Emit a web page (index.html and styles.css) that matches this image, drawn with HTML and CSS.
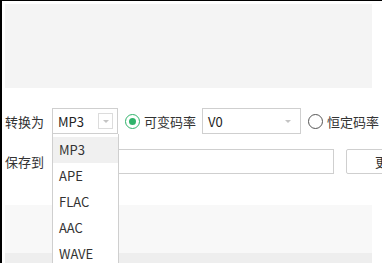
FILE: index.html
```html
<!DOCTYPE html>
<html lang="zh-CN">
<head>
  <meta charset="UTF-8" />
  <title>格式转换</title>
  <link rel="stylesheet" href="styles.css">
</head>
<body>
  <div class="frame">
    <div class="preview"></div>

    <div class="row row-format">
      <span class="label">转换为</span>
      <div class="select select-format">
        <span class="value">MP3</span>
        <span class="arrow-box"><span class="tri"></span></span>
      </div>
      <span class="radio checked"></span>
      <span class="radio-text">可变码率</span>
      <div class="select select-rate">
        <span class="value">V0</span>
        <span class="tri"></span>
      </div>
      <span class="radio"></span>
      <span class="radio-text">恒定码率</span>
    </div>

    <div class="row row-save">
      <span class="label">保存到</span>
      <div class="path-input"></div>
      <button class="btn">更改</button>
    </div>

    <div class="footer">
      <div class="footer-top"></div>
      <div class="footer-bottom"></div>
    </div>

    <ul class="dropdown">
      <li class="active">MP3</li>
      <li>APE</li>
      <li>FLAC</li>
      <li>AAC</li>
      <li>WAVE</li>
    </ul>
  </div>
</body>
</html>
```

FILE: styles.css
```css
html, body {
  margin: 0;
  padding: 0;
  background: #fff;
  overflow: hidden;
}
body {
  font-family: "Noto Sans CJK SC", "Liberation Sans", sans-serif;
  font-size: 13px;
  color: #333;
  width: 382px;
  height: 263px;
}
.frame {
  position: relative;
  height: 262px;
  width: 380px;
  border-left: 2px solid #000;
  border-top: 1px solid #000;
  padding-left: 3px;
  overflow: hidden;
}
.preview {
  margin-top: 3px;
  width: 367px;
  height: 84px;
  background: #f4f4f4;
}
.row {
  display: flex;
  align-items: center;
  white-space: nowrap;
}
.row-format {
  margin-top: 20px;
  height: 26px;
}
.row-save {
  margin-top: 15px;
  height: 25px;
}
.label {
  width: 47px;
  flex: none;
}
.select {
  box-sizing: border-box;
  height: 26px;
  border: 1px solid #cfcfcf;
  background: #fff;
  display: flex;
  align-items: center;
  padding-left: 5px;
  flex: none;
}
.select-format {
  width: 66px;
}
.select-rate {
  width: 99px;
  margin-left: 6px;
}
.value {
  flex: 1;
  color: #222;
}
.arrow-box {
  width: 13px;
  height: 14px;
  border: 1px solid #dcdcdc;
  margin-right: 4px;
  display: flex;
  align-items: center;
  justify-content: center;
}
.tri {
  width: 0;
  height: 0;
  border-left: 3px solid transparent;
  border-right: 3px solid transparent;
  border-top: 3px solid #c4c4c4;
}
.select-rate .tri {
  margin-right: 9px;
}
.radio {
  box-sizing: border-box;
  width: 15px;
  height: 15px;
  border: 1px solid #555;
  border-radius: 50%;
  margin-left: 7px;
  flex: none;
  display: flex;
  align-items: center;
  justify-content: center;
}
.radio.checked {
  border: 1.5px solid #2fb36a;
}
.radio.checked::after {
  content: "";
  width: 7px;
  height: 7px;
  border-radius: 50%;
  background: #2fb36a;
}
.radio-text {
  margin-left: 4px;
}
.path-input {
  box-sizing: border-box;
  width: 282px;
  height: 25px;
  border: 1px solid #cfcfcf;
  flex: none;
}
.btn {
  box-sizing: border-box;
  margin-left: 12px;
  width: 70px;
  height: 25px;
  border: 1px solid #cfcfcf;
  border-radius: 2px;
  background: #fff;
  font: inherit;
  color: #333;
  text-align: left;
  padding-left: 28px;
  flex: none;
}
.footer {
  margin-top: 31px;
  width: 367px;
}
.footer-top {
  height: 48px;
  background: #f8f8f8;
}
.footer-bottom {
  height: 10px;
  background: #eeeeee;
}
.dropdown {
  position: absolute;
  top: 133px;
  left: 50px;
  width: 65px;
  margin: 0;
  padding: 3px 0 0;
  list-style: none;
  background: #fff;
  border-left: 1px solid #cfcfcf;
  border-right: 1px solid #cfcfcf;
  height: 130px;
}
.dropdown li {
  height: 26px;
  line-height: 26px;
  padding-left: 6px;
  color: #333;
}
.dropdown li.active {
  background: #f0f0f0;
}
```
